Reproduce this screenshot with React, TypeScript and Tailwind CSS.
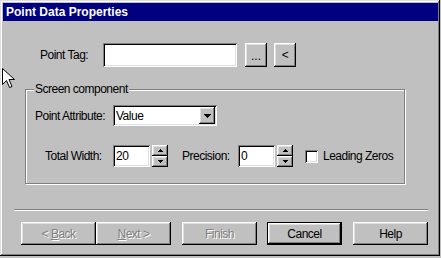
const raised =
  "shadow-[inset_-1px_-1px_#000,inset_1px_1px_#fff,inset_-2px_-2px_#808080,inset_2px_2px_#dfdfdf]";
const sunken =
  "shadow-[inset_1px_1px_#808080,inset_-1px_-1px_#fff,inset_2px_2px_#000,inset_-2px_-2px_#dfdfdf]";

function SpinButtons() {
  return (
    <div className="ml-[2px] flex h-[22px] w-[16px] flex-col">
      <div className={`flex h-[11px] items-center justify-center bg-[#c0c0c0] ${raised}`}>
        <svg width="5" height="3" viewBox="0 0 5 3">
          <path d="M2 0h1v1h1v1h1v1H0V2h1V1h1z" fill="#000" />
        </svg>
      </div>
      <div className={`flex h-[11px] items-center justify-center bg-[#c0c0c0] ${raised}`}>
        <svg width="5" height="3" viewBox="0 0 5 3">
          <path d="M0 0h5v1H4v1H3v1H2V2H1V1H0z" fill="#000" />
        </svg>
      </div>
    </div>
  );
}

function WizardButton({ children, disabled, isDefault }: { children: React.ReactNode; disabled?: boolean; isDefault?: boolean }) {
  const frame = isDefault
    ? "shadow-[inset_0_0_0_1px_#000,inset_-2px_-2px_#000,inset_2px_2px_#fff,inset_-3px_-3px_#808080,inset_3px_3px_#dfdfdf]"
    : raised;
  return (
    <div
      className={`flex h-[23px] w-[75px] items-center justify-center bg-[#c0c0c0] ${frame} ${
        disabled ? "text-[#808080] [text-shadow:1px_1px_0_#fff]" : "text-black"
      }`}
    >
      {children}
    </div>
  );
}

export default function App() {
  return (
    <div className="min-h-screen bg-[#c0c0c0] font-['Liberation_Sans',Arial,sans-serif] text-[12px] tracking-[-0.5px] text-black">
      <div className="relative flex h-[256px] w-[440px] flex-col pl-[3px] pr-[2px] pt-[3px] shadow-[inset_-1px_-1px_#000,inset_1px_1px_#dfdfdf,inset_-2px_-2px_#808080,inset_2px_2px_#fff]">
        <div className="flex h-[18px] items-center bg-[#000080] pl-[3px] text-[12px] font-bold tracking-normal text-white">
          Point Data Properties
        </div>

        {/* Point tag */}
        <div className="ml-[37px] mt-[22px] flex h-[24px] items-center">
          <span className="w-[63px]">Point Tag:</span>
          <div className={`h-[24px] w-[134px] bg-white ${sunken}`} />
          <div className={`ml-[8px] flex h-[24px] w-[22px] items-center justify-center bg-[#c0c0c0] ${raised}`}>
            <span className="mt-[2px] tracking-normal">...</span>
          </div>
          <div className={`ml-[7px] flex h-[24px] w-[22px] items-center justify-center bg-[#c0c0c0] ${raised}`}>
            &lt;
          </div>
        </div>

        {/* Screen component group */}
        <div className="relative ml-[22px] mt-[22px] h-[95px] w-[380px] border border-[#808080] shadow-[1px_1px_0_#fff,inset_1px_1px_0_#fff]">
          <span className="absolute left-[8px] top-[-8px] bg-[#c0c0c0] px-[1px] leading-[14px]">Screen component</span>

          <div className="ml-[9px] mt-[15px] flex h-[21px] items-center">
            <span className="w-[78px]">Point Attribute:</span>
            <div className={`flex h-[21px] w-[104px] items-center bg-white pl-[3px] pr-[2px] ${sunken}`}>
              <span className="flex-1">Value</span>
              <div className={`flex h-[17px] w-[16px] items-center justify-center bg-[#c0c0c0] ${raised}`}>
                <svg width="7" height="4" viewBox="0 0 7 4">
                  <path d="M0 0h7v1H6v1H5v1H4v1H3V3H2V2H1V1H0z" fill="#000" />
                </svg>
              </div>
            </div>
          </div>

          <div className="ml-[19px] mt-[19px] flex h-[22px] items-center">
            <span className="w-[68px]">Total Width:</span>
            <div className={`flex h-[22px] w-[37px] items-center bg-white pl-[3px] ${sunken}`}>20</div>
            <SpinButtons />
            <span className="ml-[14px] w-[56px]">Precision:</span>
            <div className={`flex h-[22px] w-[37px] items-center bg-white pl-[3px] ${sunken}`}>0</div>
            <SpinButtons />
            <div className={`ml-[12px] h-[13px] w-[13px] bg-white ${sunken}`} />
            <span className="ml-[5px]">Leading Zeros</span>
          </div>
        </div>

        <div className="ml-[11px] mt-[25px] h-[2px] w-[414px] border-t border-b border-t-[#808080] border-b-white" />

        <div className="ml-[18px] mt-[11px] flex">
          <WizardButton disabled>
            &lt; <span className="ml-[3px] underline underline-offset-1">B</span>ack
          </WizardButton>
          <WizardButton disabled>
            <span className="underline underline-offset-1">N</span>ext &gt;
          </WizardButton>
          <div className="ml-[11px]">
            <WizardButton disabled>Finish</WizardButton>
          </div>
          <div className="ml-[10px]">
            <WizardButton isDefault>Cancel</WizardButton>
          </div>
          <div className="ml-[11px]">
            <WizardButton>Help</WizardButton>
          </div>
        </div>

        <svg className="absolute left-[2px] top-[68px]" width="13" height="21" viewBox="0 0 13 21">
          <path
            d="M0.5 0.5v16l4-4 3 7 2.5-1-3-7h5.5z"
            fill="#fff"
            stroke="#000"
            strokeWidth="1"
            strokeLinejoin="miter"
          />
        </svg>
      </div>
    </div>
  );
}
